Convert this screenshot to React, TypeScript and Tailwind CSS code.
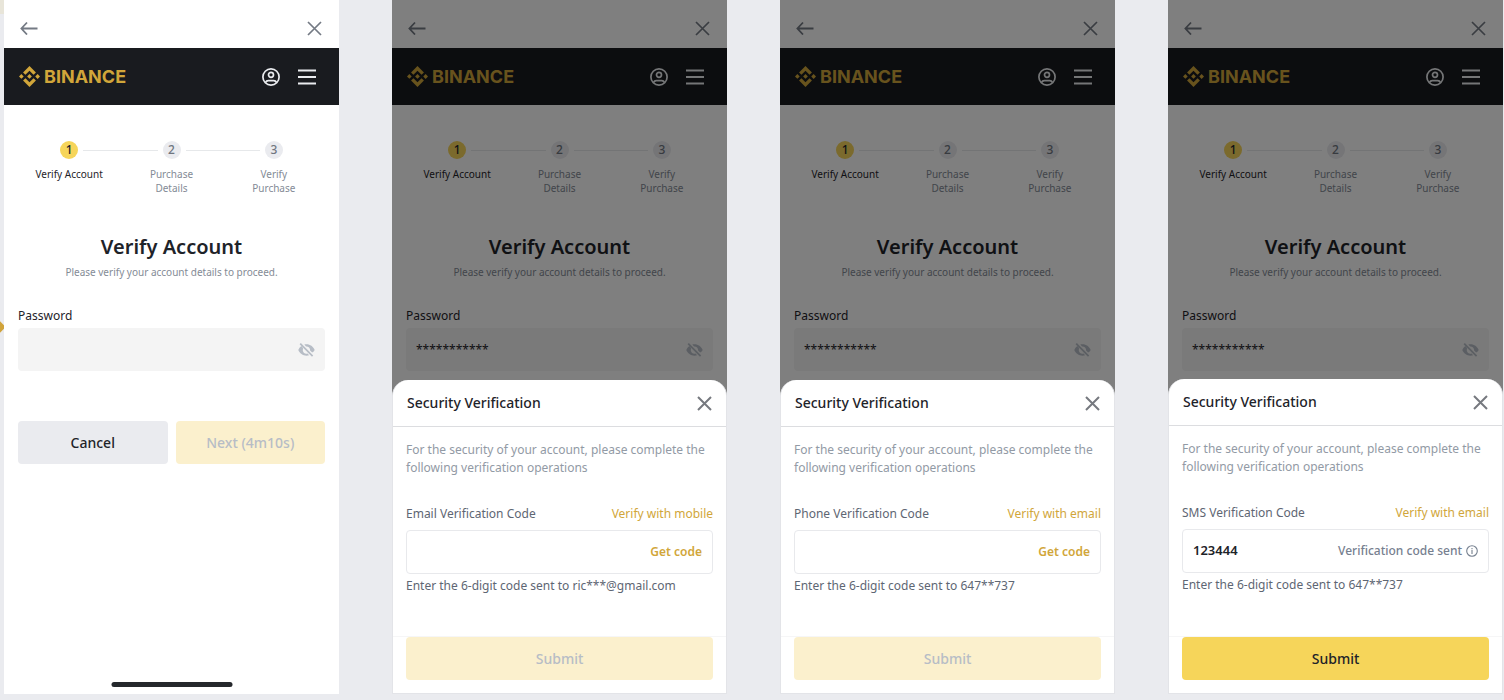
import type { ReactNode } from "react";
import { SiBinance } from "react-icons/si";

const goldText = "text-[#d1a63a]";

function ArrowLeft() {
  return (
    <svg width="18" height="14" viewBox="0 0 18 14" fill="none" stroke="currentColor" strokeWidth="1.8" aria-hidden="true">
      <path d="M1.5 7.500H17.500M7 1.500 1.4 7.500 7 13.500" />
    </svg>
  );
}

function Cross({ bold = false }: { bold?: boolean }) {
  return (
    <svg width="15" height="15" viewBox="0 0 15 15" fill="none" stroke="currentColor" strokeWidth={bold ? 2 : 1.7} aria-hidden="true">
      <path d="M1 1 14 14M14 1 1 14" />
    </svg>
  );
}

function UserCircle() {
  return (
    <svg width="18" height="18" viewBox="0 0 18 18" fill="none" stroke="currentColor" strokeWidth="1.7" aria-hidden="true">
      <circle cx="9" cy="9" r="8.1" />
      <circle cx="9" cy="6.800" r="2.500" />
      <path d="M3.4 14.6C4.2 13 5 12.600 6.2 12.600H11.8C13 12.600 13.8 13 14.6 14.6" />
    </svg>
  );
}

function Bars() {
  return (
    <svg width="18" height="16" viewBox="0 0 18 16" fill="none" stroke="currentColor" strokeWidth="1.8" aria-hidden="true">
      <path d="M0 1.5H18M0 8H18M0 14.5H18" />
    </svg>
  );
}

function EyeOff() {
  return (
    <svg width="17" height="14" viewBox="0 0 17 14" fill="currentColor" aria-hidden="true">
      <path d="M3.300 3C1.900 4.100.900 5.500.3 7c1.400 3.400 4.500 5.700 8.200 5.700.9 0 1.800-.1 2.600-.4L9.500 10.600A3.700 3.700 0 0 1 4.900 6c0-.4.100-.8.200-1.100z" />
      <path d="M6.300 1.600 8.100 3.400A3.700 3.700 0 0 1 12.100 7.500L14.200 9.600C15.300 8.900 16.200 8 16.700 7 15.300 3.600 12.200 1.300 8.500 1.300c-.8 0-1.500.1-2.200.3z" />
      <path d="M2.200.7 14.600 13.100" fill="none" stroke="currentColor" strokeWidth="1.700" />
    </svg>
  );
}

function Info() {
  return (
    <svg width="12" height="12" viewBox="0 0 12 12" fill="none" stroke="currentColor" strokeWidth="1.1" aria-hidden="true">
      <circle cx="6" cy="6" r="5.300" />
      <path d="M6 5V9M6 3V4.200" />
    </svg>
  );
}

const steps = ["Verify Account", "Purchase Details", "Verify Purchase"];

function Stepper() {
  return (
    <ol className="grid grid-cols-3 pt-9 text-center text-[10px] leading-[14px]">
      {steps.map((label, i) => (
        <li key={label} className={i === 0 ? "text-[#1e2329]" : "text-[#848b96]"}>
          <div className="flex h-[18px] items-center gap-1">
            <span className={i === 0 ? "h-px flex-1" : "h-px flex-1 bg-[#e6e8ea]"} />
            <span
              className={
                i === 0
                  ? "mx-px flex size-[18px] items-center justify-center rounded-full bg-[#f6d55a] text-xs font-medium text-[#1e2329]"
                  : "mx-px flex size-[18px] items-center justify-center rounded-full bg-[#eaebef] text-xs font-medium text-[#707680]"
              }
            >
              {i + 1}
            </span>
            <span className={i === 2 ? "h-px flex-1" : "h-px flex-1 bg-[#e6e8ea]"} />
          </div>
          <p className={i === 0 ? "pt-2" : "px-5 pt-2"}>{label}</p>
        </li>
      ))}
    </ol>
  );
}

function Phone({ id, password, actions, sheet }: { id: string; password: string; actions?: ReactNode; sheet?: ReactNode }) {
  return (
    <section className="relative flex min-h-[694px] flex-col bg-white">
      <div className="flex h-12 items-center justify-between pr-[17px] pl-4 pt-2 text-[#747a84]">
        <button type="button" aria-label="Back"><ArrowLeft /></button>
        <button type="button" aria-label="Close"><Cross /></button>
      </div>
      <header className="flex h-[57px] items-center bg-[#191b1f] pr-[23px] pl-[15px] text-[#eaecef]">
        <a href="#" className={`flex flex-1 items-center gap-1 font-[Inter,sans-serif] text-[18px] leading-5 font-bold ${goldText}`}>
          <SiBinance size={21} aria-hidden="true" />
          BINANCE
        </a>
        <div className="flex items-center gap-[18px]">
          <button type="button" aria-label="Account"><UserCircle /></button>
          <button type="button" aria-label="Menu"><Bars /></button>
        </div>
      </header>
      <main className="px-[14px]">
        <Stepper />
        <h1 className="pt-[38px] text-center text-[20px] leading-7 font-semibold text-[#1e2329]">Verify Account</h1>
        <p className="pt-[3px] text-center text-[10px] leading-4 text-[#848b96]">Please verify your account details to proceed.</p>
        <label htmlFor={id} className="block pt-7 pb-1 text-[12px] leading-4 text-[#1e2329]">Password</label>
        <div className="flex h-[43px] items-center rounded bg-[#f4f4f4] px-[10px]">
          <input id={id} defaultValue={password} className="min-w-0 flex-1 text-xs text-[#1e2329] outline-none" />
          <button type="button" aria-label="Show password" className="text-[#b7bdc6]"><EyeOff /></button>
        </div>
        {actions}
      </main>
      {sheet && <div className="absolute inset-0 flex flex-col justify-end bg-black/50">{sheet}</div>}
    </section>
  );
}

type SheetProps = { id: string; label: string; alternative: string; target: string; code?: string };

function Sheet({ id, label, alternative, target, code }: SheetProps) {
  return (
    <div className="rounded-t-2xl border-x border-b border-[#e3e4e8] bg-white">
      <div className="flex h-[47px] items-center justify-between border-b border-[#dcdde0] px-[14px]">
        <h2 className="text-[14px] leading-5 font-medium text-[#1e2329]">Security Verification</h2>
        <button type="button" aria-label="Close" className="text-[#76797f]"><Cross bold /></button>
      </div>
      <div className="px-[13px]">
        <p className="pt-[14px] text-[12px] leading-[18px] text-[#929aa5]">
          For the security of your account, please complete the following verification operations
        </p>
        <div className="flex justify-between pt-7 text-[12px] leading-[18px] text-[#5e6673]">
          <label htmlFor={id}>{label}</label>
          <a href="#" className={goldText}>{alternative}</a>
        </div>
        <div className="mt-[7px] flex h-11 items-center rounded border border-[#e8e9ec] px-[10px]">
          <input id={id} defaultValue={code} className="min-w-0 flex-1 text-[13px] font-semibold text-[#1e2329] outline-none" />
          {code ? (
            <span className="flex items-center gap-1 text-[12px] font-medium text-[#76808f]">
              Verification code sent
              <Info />
            </span>
          ) : (
            <button type="button" className={`text-[12px] font-semibold ${goldText}`}>Get code</button>
          )}
        </div>
        <p className="pt-[3px] text-[12px] leading-[18px] text-[#5e6673]">Enter the 6-digit code sent to {target}</p>
      </div>
      <div className={code ? "mt-[42px] border-t border-[#f6f6f7] px-[13px] pb-[13px]" : "mt-[41px] border-t border-[#f6f6f7] px-[13px] pb-[13px]"}>
        <button
          type="button"
          disabled={!code}
          className={
            code
              ? "h-[43px] w-full rounded bg-[#f6d55a] text-[14px] font-medium text-[#1e2329]"
              : "h-[43px] w-full rounded bg-[#fbf0cd] text-[14px] font-medium text-[#b7bdc6]"
          }
        >
          Submit
        </button>
      </div>
    </div>
  );
}

export default function App() {
  return (
    <div className="relative grid min-h-screen grid-cols-1 gap-x-[53px] overflow-hidden bg-[#eaebef] pr-px pb-[6px] pl-1 font-['Noto_Sans',sans-serif] sm:grid-cols-2 lg:grid-cols-4">
      <div className="absolute top-0 left-0 h-[14px] w-1 bg-[#e8e5d9]" />
      <div className="absolute top-[323px] -left-1 size-2 rotate-45 bg-[#d0a33a]" />
      <Phone
        id="password-empty"
        password=""
        actions={
          <>
            <div className="grid grid-cols-2 gap-2 pt-[50px]">
              <button type="button" className="h-[43px] rounded bg-[#eaebef] text-[14px] font-medium text-[#1e2329]">Cancel</button>
              <button type="button" disabled className="h-[43px] rounded bg-[#fbf0cd] text-[14px] font-medium text-[#b7bdc6]">Next (4m10s)</button>
            </div>
            <div className="absolute bottom-[7px] left-1/2 h-[5px] w-[121px] -translate-x-1/2 rounded-full bg-[#25282c]" />
          </>
        }
      />
      <Phone
        id="password-email"
        password="***********"
        sheet={<Sheet id="code-email" label="Email Verification Code" alternative="Verify with mobile" target="ric***@gmail.com" />}
      />
      <Phone
        id="password-phone"
        password="***********"
        sheet={<Sheet id="code-phone" label="Phone Verification Code" alternative="Verify with email" target="647**737" />}
      />
      <Phone
        id="password-sms"
        password="***********"
        sheet={<Sheet id="code-sms" label="SMS Verification Code" alternative="Verify with email" target="647**737" code="123444" />}
      />
    </div>
  );
}
